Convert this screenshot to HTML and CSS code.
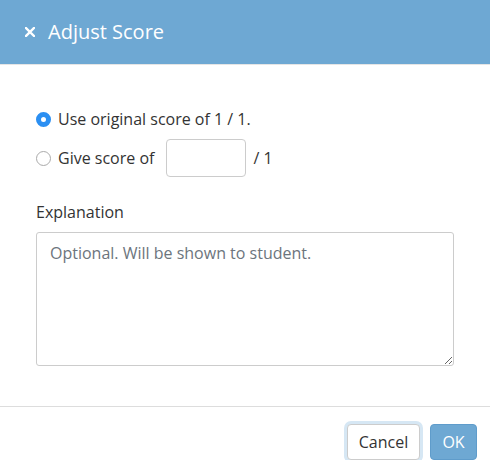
FILE: index.html
```html
<!DOCTYPE html>
<html lang="en">
<head>
    <meta charset="UTF-8">
    <meta name="viewport" content="width=device-width, initial-scale=1.0">
    <title>Adjust Score</title>
    <link rel="stylesheet" href="styles.css">
</head>
<body>
    <div class="modal">
        <div class="modal-header">
            <svg class="close-icon" width="10" height="10" viewBox="0 0 10 10">
                <path d="M1 1 L9 9 M9 1 L1 9" stroke="#fff" stroke-width="2.4" stroke-linecap="square"/>
            </svg>
            <h1 class="modal-title">Adjust Score</h1>
        </div>

        <form class="modal-body">
            <label class="radio-row">
                <input type="radio" name="score" class="radio" checked>
                <span>Use original score of 1 / 1.</span>
            </label>
            <label class="radio-row radio-row-input">
                <input type="radio" name="score" class="radio">
                <span>Give score of</span>
                <input type="text" class="score-box">
                <span>/ 1</span>
            </label>

            <label for="explanation" class="field-label">Explanation</label>
            <textarea id="explanation" class="explanation-box" placeholder="Optional. Will be shown to student."></textarea>
        </form>

        <div class="modal-footer">
            <button type="button" class="btn btn-cancel">Cancel</button>
            <button type="button" class="btn btn-ok">OK</button>
        </div>
    </div>
</body>
</html>
```

FILE: styles.css
```css
body {
    font-family: "Open Sans", Arial, sans-serif;
    background-color: #fff;
    color: #333;
    margin: 0;
    font-size: 16px;
}
.modal {
    width: 490px;
}
.modal-header {
    height: 65px;
    background-color: #6ea8d3;
    border-bottom: 1px solid #e5e5e5;
    display: flex;
    align-items: center;
    padding: 0 25px 1px 25px;
    box-sizing: border-box;
}
.close-icon {
    margin-right: 13px;
}
.modal-title {
    margin: 0;
    color: #fff;
    font-size: 20px;
    font-weight: 400;
}
.modal-body {
    padding: 42px 36px 40px 36px;
}
.radio-row {
    display: flex;
    align-items: center;
    height: 24px;
}
.radio-row-input {
    height: 38px;
    margin-top: 8px;
}
.radio {
    appearance: none;
    -webkit-appearance: none;
    width: 15px;
    height: 15px;
    margin: 0 7px 0 0;
    border: 1px solid #aaa;
    border-radius: 50%;
    background-color: #fff;
    box-sizing: border-box;
}
.radio:checked {
    border: 5px solid #2b8ff2;
}
.score-box {
    width: 80px;
    height: 38px;
    box-sizing: border-box;
    margin: 0 7px 0 12px;
    border: 1px solid #ccc;
    border-radius: 4px;
    padding: 6px 10px;
    font-family: inherit;
    font-size: 16px;
}
.field-label {
    display: block;
    margin-top: 25px;
    line-height: 20px;
}
.explanation-box {
    display: block;
    width: 418px;
    height: 134px;
    margin-top: 10px;
    box-sizing: border-box;
    border: 1px solid #ccc;
    border-radius: 3px;
    padding: 9px 13px;
    font-family: inherit;
    font-size: 16px;
    color: #333;
}
.explanation-box::placeholder {
    color: #6c757d;
}
.modal-footer {
    border-top: 1px solid #ddd;
    padding: 17px 13px 0 0;
    display: flex;
    justify-content: flex-end;
    gap: 10px;
}
.btn {
    height: 36px;
    border-radius: 4px;
    font-family: inherit;
    font-size: 16px;
    padding: 0;
    cursor: pointer;
}
.btn-cancel {
    width: 73px;
    background-color: #fff;
    color: #333;
    border: 1px solid #ccc;
    box-shadow: 0 0 0 3px #d6e7f4;
}
.btn-ok {
    width: 47px;
    background-color: #6ea8d3;
    color: #fff;
    border: 1px solid #5f9ccb;
}
```
